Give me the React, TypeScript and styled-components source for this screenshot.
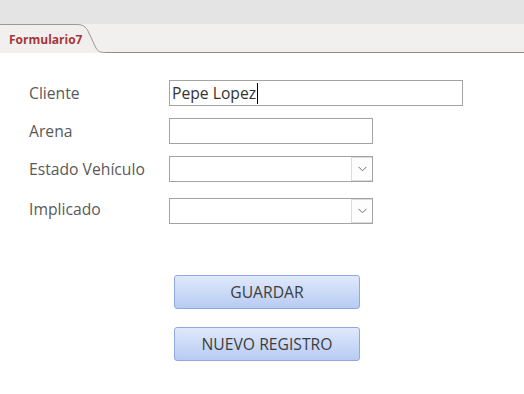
import React from 'react';
import styled, { createGlobalStyle } from 'styled-components';

const GlobalStyle = createGlobalStyle`
    html, body {
        margin: 0;
        padding: 0;
        background: #ffffff;
        font-family: 'Open Sans', 'Liberation Sans', sans-serif;
    }
`;

const Page = styled.div`
    width: 524px;
    height: 394px;
    display: flex;
    flex-direction: column;
    background: #ffffff;
    overflow: hidden;
`;

const TopBand = styled.div`
    height: 24px;
    background: #e4e4e4;
`;

const TabStrip = styled.div`
    display: flex;
    height: 29px;
    background: #f1f0ef;
`;

const Tab = styled.div`
    position: relative;
    width: 106px;
    height: 29px;
    flex-shrink: 0;
`;

const TabOutline = styled.svg`
    position: absolute;
    left: 0;
    top: 0;
`;

const TabLabel = styled.span`
    position: relative;
    display: block;
    padding: 8px 0 0 9px;
    font-size: 12px;
    line-height: 16px;
    font-weight: 700;
    color: #a4373a;
`;

const TabFiller = styled.div`
    flex: 1;
    border-bottom: 1px solid #8e8e8e;
`;

const FormBody = styled.div`
    padding: 27px 0 0 29px;
`;

const FieldGrid = styled.div`
    display: grid;
    grid-template-columns: 140px auto;
    align-items: center;
`;

const Label = styled.div<{ $gap: number; $shift?: number }>`
    height: 26px;
    margin-bottom: ${(p) => p.$gap}px;
    font-size: 15.7px;
    line-height: 26px;
    color: #595959;
    transform: translateY(${(p) => p.$shift ?? 0}px);
`;

const Box = styled.div<{ $width: number; $gap: number }>`
    position: relative;
    box-sizing: border-box;
    width: ${(p) => p.$width}px;
    height: 26px;
    margin-bottom: ${(p) => p.$gap}px;
    border: 1px solid #a3a3a3;
    background: #ffffff;
    padding-left: 2px;
    display: flex;
    align-items: center;
    font-size: 15.7px;
    color: #333333;
`;

const Caret = styled.span`
    display: inline-block;
    width: 1px;
    height: 21px;
    margin-left: 1px;
    background: #000000;
`;

const DropButton = styled.div`
    position: absolute;
    right: 0;
    top: 0;
    bottom: 0;
    width: 21px;
    box-sizing: border-box;
    border: 1px solid #dadada;
    border-right: none;
    background: #fdfdfd;
    display: flex;
    align-items: center;
    justify-content: center;
`;

const ButtonColumn = styled.div`
    display: flex;
    flex-direction: column;
    gap: 18px;
    margin: 51px 0 0 145px;
`;

const ActionButton = styled.button`
    box-sizing: border-box;
    width: 186px;
    height: 34px;
    border: 1px solid #8fa9df;
    border-radius: 3px;
    background: linear-gradient(#e0e9fb, #b7cbf3);
    font-family: 'Open Sans', 'Liberation Sans', sans-serif;
    font-size: 15.7px;
    color: #3d3d3d;
    padding: 0;
`;

const Chevron = () => (
    <svg width="9" height="6" viewBox="0 0 9 6">
        <path d="M0.5 0.8 L4.5 4.8 L8.5 0.8" fill="none" stroke="#6f6f6f" strokeWidth="1" />
    </svg>
);

const Select: React.FC<{ gap: number }> = ({ gap }) => (
    <Box $width={204} $gap={gap}>
        <DropButton>
            <Chevron />
        </DropButton>
    </Box>
);

export default function App() {
    return (
        <Page>
            <GlobalStyle />
            <TopBand />
            <TabStrip>
                <Tab>
                    <TabOutline width="106" height="29" viewBox="0 0 106 29">
                        <path
                            d="M0 0.5 H77 C83 0.5 86 3 88 7 L96 24 C98 27.5 100 28.5 106 28.5"
                            fill="#f0efee"
                            stroke="#9a9a9a"
                            strokeWidth="1"
                        />
                    </TabOutline>
                    <TabLabel>Formulario7</TabLabel>
                </Tab>
                <TabFiller />
            </TabStrip>
            <FormBody>
                <FieldGrid>
                    <Label $gap={12}>Cliente</Label>
                    <Box $width={294} $gap={12}>
                        Pepe Lopez
                        <Caret />
                    </Box>
                    <Label $gap={12}>Arena</Label>
                    <Box $width={204} $gap={12} />
                    <Label $gap={16}>Estado Vehículo</Label>
                    <Select gap={16} />
                    <Label $gap={0} $shift={-2}>Implicado</Label>
                    <Select gap={0} />
                </FieldGrid>
                <ButtonColumn>
                    <ActionButton>GUARDAR</ActionButton>
                    <ActionButton>NUEVO REGISTRO</ActionButton>
                </ButtonColumn>
            </FormBody>
        </Page>
    );
}
